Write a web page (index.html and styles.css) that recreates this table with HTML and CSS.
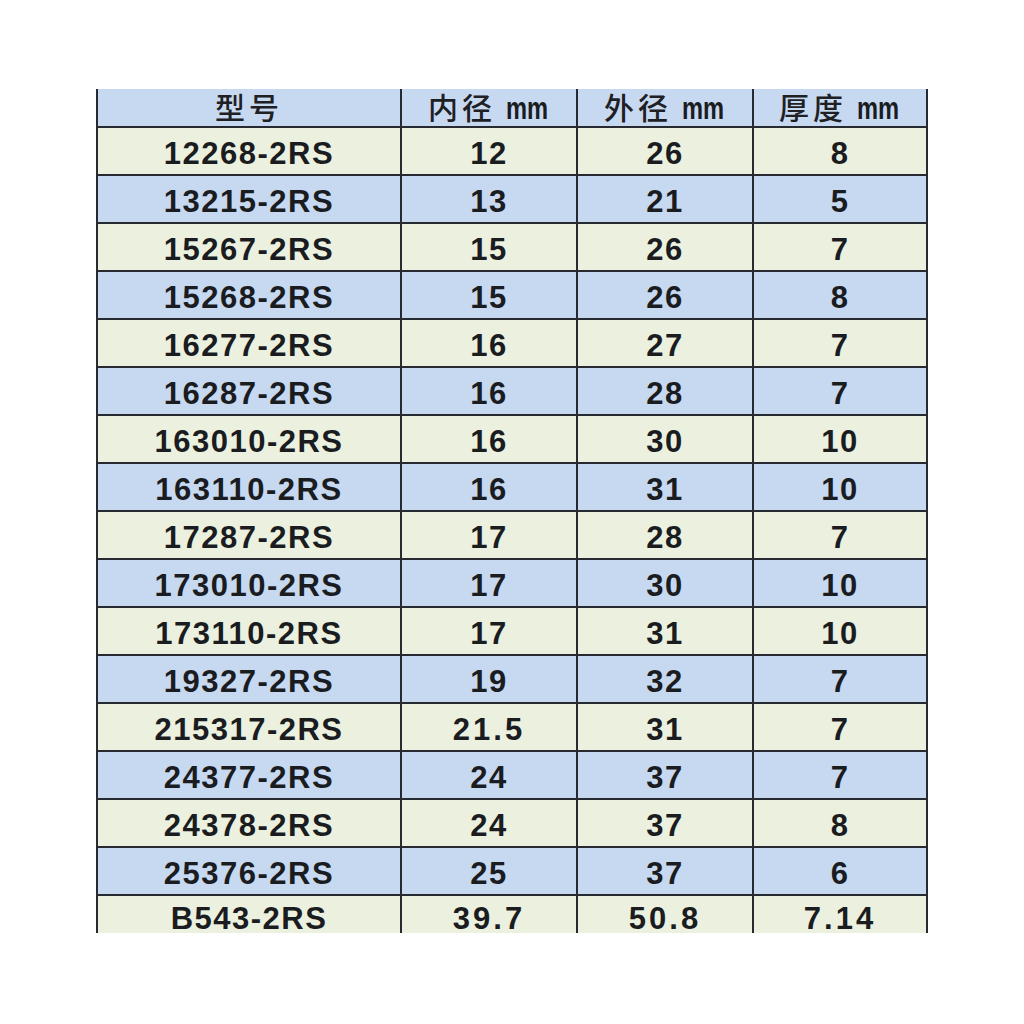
FILE: index.html
```html
<!DOCTYPE html>
<html lang="zh">
<head>
<meta charset="utf-8">
<title>轴承尺寸表</title>
<link rel="stylesheet" href="styles.css">
</head>
<body>
<div class="sheet">
  <div class="grid">
    <div class="cell head"><span class="cjk">型号</span></div>
    <div class="cell head"><span class="cjk">内径</span><span class="unit">mm</span></div>
    <div class="cell head"><span class="cjk">外径</span><span class="unit">mm</span></div>
    <div class="cell head"><span class="cjk">厚度</span><span class="unit">mm</span></div>

    <div class="cell g">12268-2RS</div><div class="cell g">12</div><div class="cell g">26</div><div class="cell g">8</div>
    <div class="cell b">13215-2RS</div><div class="cell b">13</div><div class="cell b">21</div><div class="cell b">5</div>
    <div class="cell g">15267-2RS</div><div class="cell g">15</div><div class="cell g">26</div><div class="cell g">7</div>
    <div class="cell b">15268-2RS</div><div class="cell b">15</div><div class="cell b">26</div><div class="cell b">8</div>
    <div class="cell g">16277-2RS</div><div class="cell g">16</div><div class="cell g">27</div><div class="cell g">7</div>
    <div class="cell b">16287-2RS</div><div class="cell b">16</div><div class="cell b">28</div><div class="cell b">7</div>
    <div class="cell g">163010-2RS</div><div class="cell g">16</div><div class="cell g">30</div><div class="cell g">10</div>
    <div class="cell b">163110-2RS</div><div class="cell b">16</div><div class="cell b">31</div><div class="cell b">10</div>
    <div class="cell g">17287-2RS</div><div class="cell g">17</div><div class="cell g">28</div><div class="cell g">7</div>
    <div class="cell b">173010-2RS</div><div class="cell b">17</div><div class="cell b">30</div><div class="cell b">10</div>
    <div class="cell g">173110-2RS</div><div class="cell g">17</div><div class="cell g">31</div><div class="cell g">10</div>
    <div class="cell b">19327-2RS</div><div class="cell b">19</div><div class="cell b">32</div><div class="cell b">7</div>
    <div class="cell g">215317-2RS</div><div class="cell g dec">21.5</div><div class="cell g">31</div><div class="cell g">7</div>
    <div class="cell b">24377-2RS</div><div class="cell b">24</div><div class="cell b">37</div><div class="cell b">7</div>
    <div class="cell g">24378-2RS</div><div class="cell g">24</div><div class="cell g">37</div><div class="cell g">8</div>
    <div class="cell b">25376-2RS</div><div class="cell b">25</div><div class="cell b">37</div><div class="cell b">6</div>
    <div class="cell g cut">B543-2RS</div><div class="cell g cut dec">39.7</div><div class="cell g cut dec">50.8</div><div class="cell g cut dec">7.14</div>
  </div>
</div>
</body>
</html>
```

FILE: styles.css
```css
html, body {
  margin: 0;
  padding: 0;
  background: #ffffff;
}

body {
  width: 1024px;
  height: 1024px;
  overflow: hidden;
}

.sheet {
  margin: 89px 0 0 96px;
  width: 832px;
}

.grid {
  display: grid;
  grid-template-columns: 302px 174px 174px 172px;
  grid-template-rows: 37px repeat(16, 46px) 37px;
  gap: 2px;
  padding: 0 2px;
  background: #272b31;
}

.cell {
  display: flex;
  align-items: center;
  justify-content: center;
  padding-top: 5px;
  box-sizing: border-box;
  font-family: "Liberation Sans", Arial, sans-serif;
  font-weight: bold;
  font-size: 31px;
  line-height: 34px;
  letter-spacing: 1.5px;
  color: #1a1c1f;
  white-space: nowrap;
}

.head {
  background: #c6d9f1;
  padding-top: 0;
  padding-bottom: 3px;
  line-height: 30px;
  letter-spacing: 0;
}

.g {
  background: #ebf1de;
}

.b {
  background: #c6d9f1;
}

.dec {
  letter-spacing: 3px;
}

.cut {
  align-items: flex-start;
  padding-top: 6px;
  overflow: hidden;
}

.cjk {
  font-family: "Noto Sans CJK SC", "Noto Sans CJK JP", sans-serif;
  font-weight: 500;
  font-size: 30px;
  line-height: 30px;
  letter-spacing: 4px;
  color: #1e2024;
}

.unit {
  display: inline-block;
  margin-left: 10px;
  font-family: "Liberation Sans", Arial, sans-serif;
  font-weight: bold;
  font-size: 32px;
  line-height: 30px;
  transform: scaleX(0.74);
  transform-origin: left center;
  width: 44px;
  margin-top: 4px;
}
```
